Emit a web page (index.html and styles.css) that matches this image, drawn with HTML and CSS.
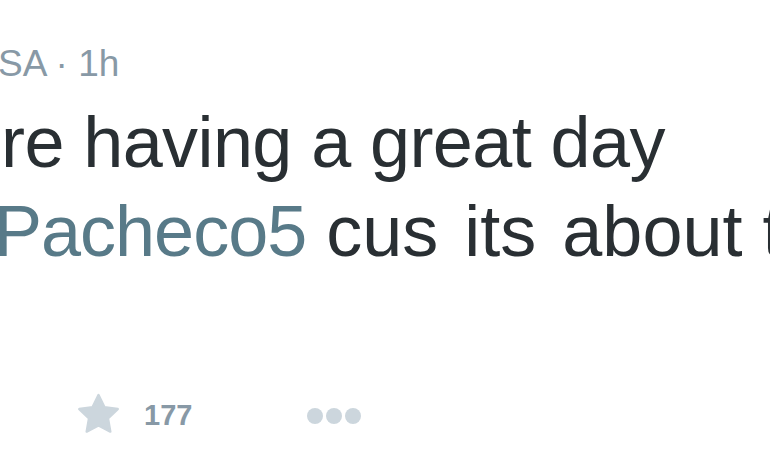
FILE: index.html
```html
<!DOCTYPE html>
<html>
<head>
<meta charset="utf-8">
<link rel="stylesheet" href="styles.css">
</head>
<body>
<div class="tweet">
  <div class="meta"><span class="name">SA</span> · <span class="time">1h</span></div>
  <div class="text">
    <div class="line first">re having a great day</div>
    <div class="line second"><span class="mention">Pacheco5</span> <span class="rest">cus its about</span> time</div>
  </div>
  <div class="actions">
    <svg class="star" width="43" height="40" viewBox="1.6 1.6 20.8 19.8" aria-hidden="true">
      <path d="M12 2.6l2.9 6 6.6.95-4.8 4.6 1.15 6.55L12 17.6l-5.85 3.1 1.15-6.55-4.8-4.6 6.6-.95z" fill="#ccd6dd" stroke="#ccd6dd" stroke-width="1.2" stroke-linejoin="round"/>
    </svg>
    <span class="count">177</span>
    <span class="more"><i></i><i></i><i></i></span>
  </div>
</div>
</body>
</html>
```
FILE: styles.css
```css
html, body {
  margin: 0;
  padding: 0;
  background: #ffffff;
  overflow: hidden;
  width: 770px;
  height: 470px;
}
.tweet {
  font-family: "Liberation Sans", Arial, Helvetica, sans-serif;
  white-space: nowrap;
}
.meta {
  margin-top: 44px;
  margin-left: -2px;
  font-size: 37px;
  line-height: 40px;
  color: #8899a6;
}
.text {
  margin-top: 14px;
  font-size: 72px;
  line-height: 89px;
  color: #292f33;
}
.line.first {
  margin-left: 1px;
  letter-spacing: -0.6px;
}
.line.second {
  margin-left: -6px;
}
.mention {
  color: #587a88;
  letter-spacing: -1px;
}
.rest {
  word-spacing: 6px;
}
.actions {
  margin-top: 117px;
  padding-left: 77px;
  display: flex;
  align-items: center;
  height: 40px;
}
.star {
  display: block;
}
.count {
  margin-left: 24px;
  font-size: 29px;
  font-weight: bold;
  color: #8899a6;
  line-height: 40px;
  padding-top: 3px;
}
.more {
  margin-left: 115px;
  display: flex;
  gap: 3px;
  padding-top: 6px;
}
.more i {
  display: block;
  width: 16px;
  height: 16px;
  border-radius: 50%;
  background: #ccd6dd;
}
```
